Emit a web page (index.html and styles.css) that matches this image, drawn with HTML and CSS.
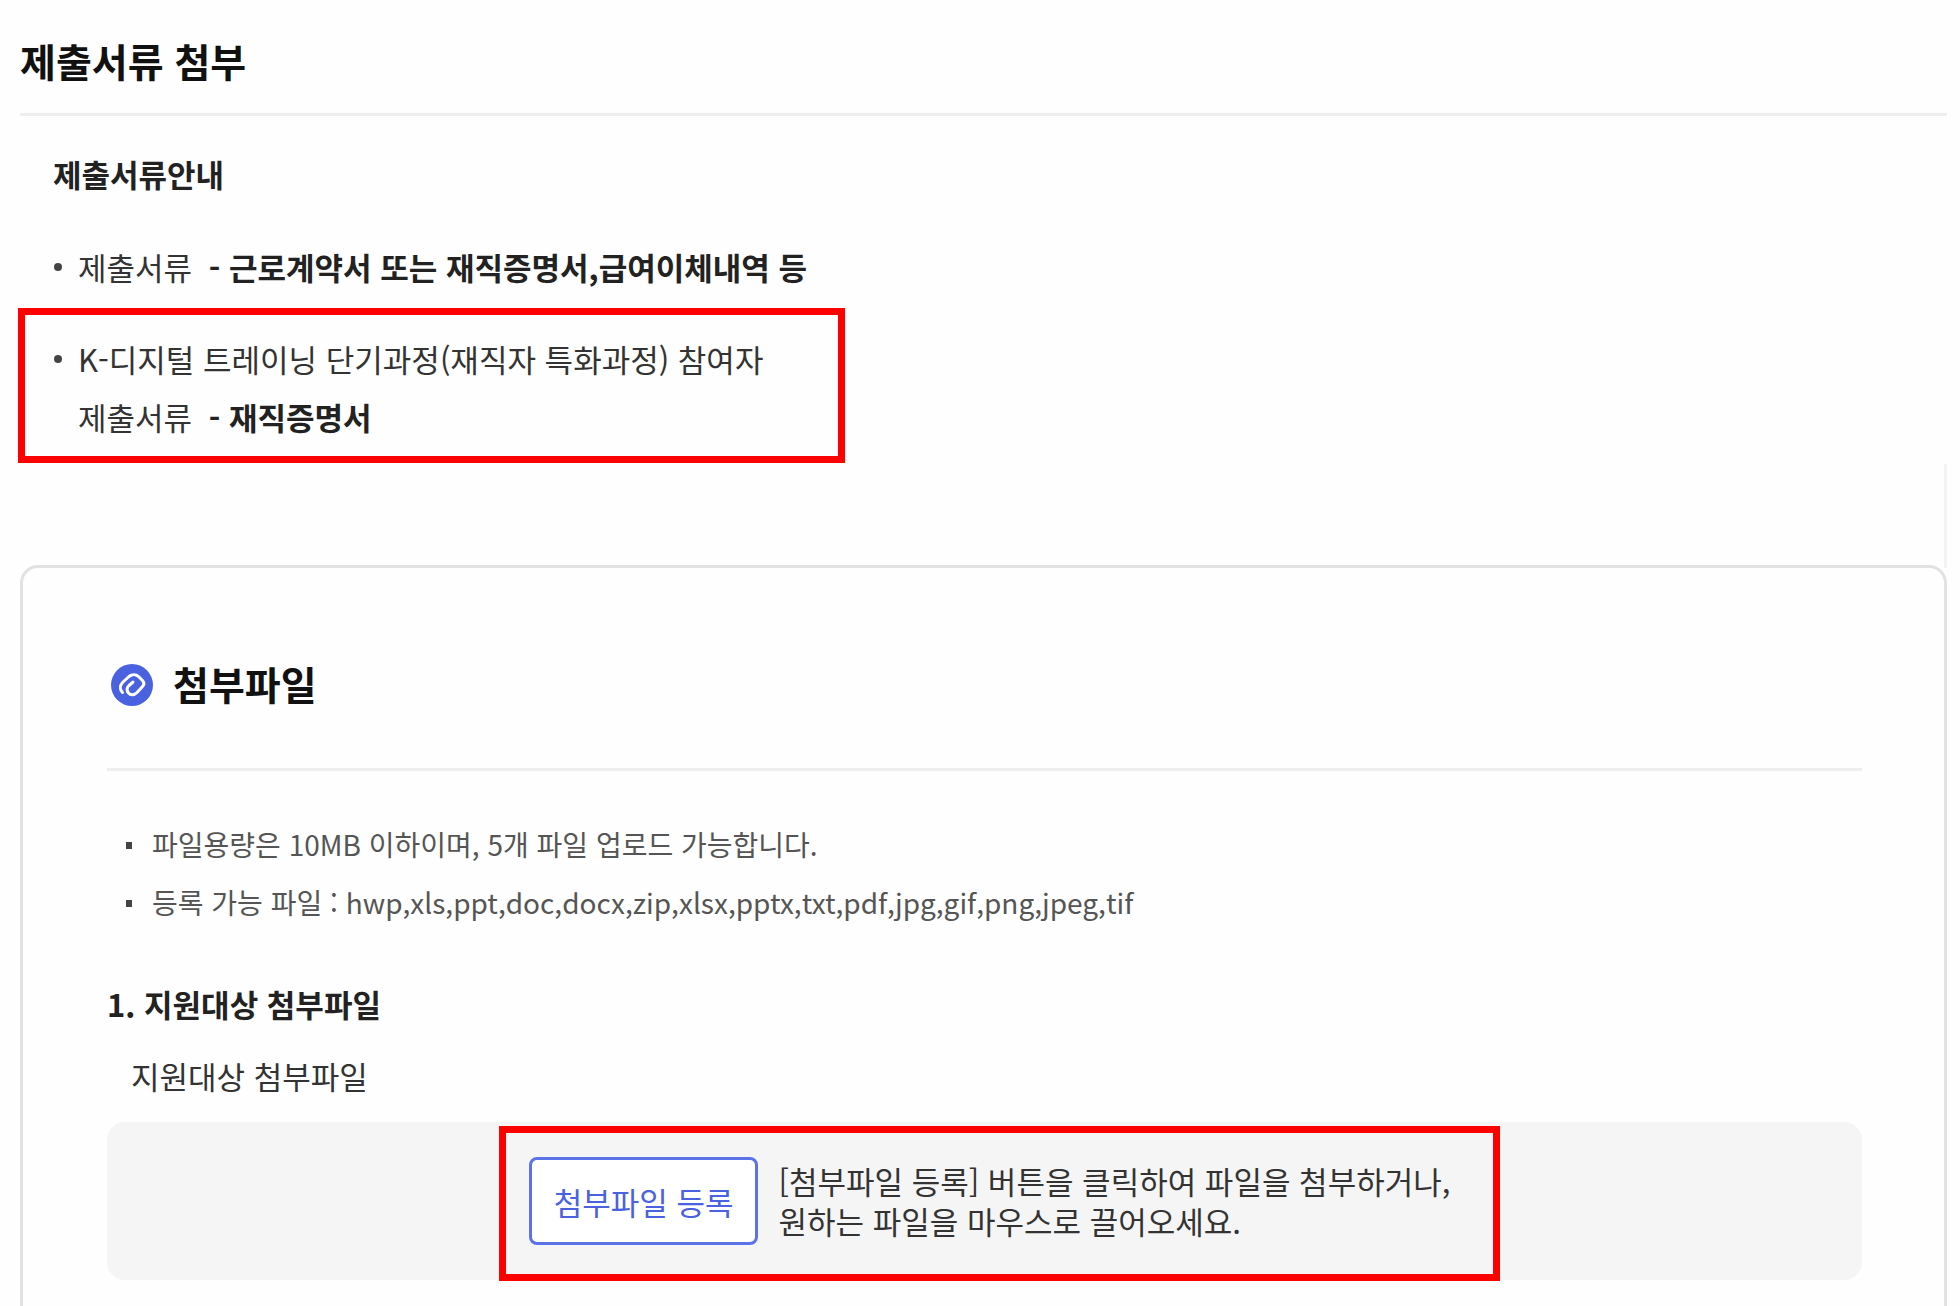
FILE: index.html
```html
<!DOCTYPE html>
<html lang="ko">
<head>
    <meta charset="UTF-8">
    <meta name="viewport" content="width=device-width, initial-scale=1.0">
    <title>제출서류 첨부</title>
    <link rel="stylesheet" href="styles.css">
</head>
<body>
    <main class="content">
        <h1 class="page-title">제출서류 첨부</h1>

        <section class="guide">
            <h2 class="guide-title">제출서류안내</h2>
            <ul class="guide-list">
                <li>제출서류 <strong>- 근로계약서 또는 재직증명서,급여이체내역 등</strong></li>
                <li class="marked">K-디지털 트레이닝 단기과정(재직자 특화과정) 참여자<br>제출서류 <strong>- 재직증명서</strong></li>
            </ul>
        </section>

        <section class="card">
            <h2 class="card-title">
                <svg class="clip-icon" viewBox="0 0 42 42" aria-hidden="true">
                    <circle cx="21" cy="21" r="21" fill="#4a61e0"/>
                    <path d="M11.500 28.500C9 26 8.500 22 11.500 18.500L18 12.500C21 10 25 10 27.500 12.500L31.500 16.500C33.500 19 33.500 20.500 31.500 22.500L26 28.500C23 31.500 19.500 31.500 17.500 29C15.500 26.500 16 23.500 18 21.500L22 18" fill="none" stroke="#fff" stroke-width="3" stroke-linecap="round" stroke-linejoin="round"/>
                </svg>
                <span>첨부파일</span>
            </h2>

            <ul class="file-rules">
                <li>파일용량은 10MB 이하이며, 5개 파일 업로드 가능합니다.</li>
                <li>등록 가능 파일 : hwp,xls,ppt,doc,docx,zip,xlsx,pptx,txt,pdf,jpg,gif,png,jpeg,tif</li>
            </ul>

            <h3 class="file-title">1. 지원대상 첨부파일</h3>
            <p class="file-label" id="file-label">지원대상 첨부파일</p>

            <div class="upload-box">
                <div class="upload-inner">
                    <button type="button" class="upload-btn" aria-describedby="file-label">첨부파일 등록</button>
                    <p class="upload-text">[첨부파일 등록] 버튼을 클릭하여 파일을 첨부하거나,<br>원하는 파일을 마우스로 끌어오세요.</p>
                </div>
            </div>
        </section>
    </main>
</body>
</html>
```
FILE: styles.css
```css
* {
    box-sizing: border-box;
}

body {
    margin: 0;
    background: #fefefe;
    color: #333;
    font-family: "Noto Sans CJK KR", sans-serif;
    font-size: 31px;
    overflow: hidden;
}

h1, h2, h3, p, ul {
    margin: 0;
    padding: 0;
}

ul {
    list-style: none;
}

.content {
    padding: 0 13px 0 20px;
}

.page-title {
    padding: 31px 0 24px;
    border-bottom: 3px solid #eee;
    color: #111;
    font-size: 39px;
    line-height: 58px;
}

.guide {
    padding: 29px 33px 0;
}

.guide-title {
    margin-bottom: 35px;
    color: #222;
    font-size: 31px;
    line-height: 58px;
}

.guide-list {
    display: flex;
    flex-direction: column;
    align-items: flex-start;
    gap: 34px;
    line-height: 58px;
}

.guide-list li {
    position: relative;
    padding-left: 25px;
}

.guide-list li::before {
    content: "";
    position: absolute;
    top: 25px;
    left: 1px;
    width: 8px;
    height: 8px;
    border-radius: 50%;
    background: #444;
}

.guide-list strong {
    margin-left: 8px;
    color: #222;
}

/* red highlight frames */
.marked::after,
.upload-inner::after {
    content: "";
    position: absolute;
    border: 7px solid #f00;
    pointer-events: none;
}

.marked::after {
    inset: -22px -82px -17px -35px;
}

.card {
    position: relative;
    margin-top: 119px;
    padding: 88px 82px 60px 84px;
    border: 3px solid #e2e2e2;
    border-radius: 18px;
}

/* faint edge that runs on above the card */
.card::before {
    content: "";
    position: absolute;
    right: -3px;
    bottom: 100%;
    width: 3px;
    height: 104px;
    background: #f3f3f3;
}

.card-title {
    display: flex;
    align-items: center;
    gap: 20px;
    padding: 0 0 54px 4px;
    border-bottom: 3px solid #eee;
    color: #111;
    font-size: 39px;
    line-height: 58px;
}

.card-title span {
    padding-bottom: 4px;
    line-height: 54px;
}

.clip-icon {
    width: 42px;
    height: 42px;
}

.file-rules {
    padding: 44px 0 0 45px;
    color: #555;
    font-size: 28px;
    line-height: 58px;
}

.file-rules li {
    position: relative;
}

.file-rules li::before {
    content: "";
    position: absolute;
    top: 27px;
    left: -26px;
    width: 6px;
    height: 7px;
    background: #444;
}

.file-title {
    margin-top: 44px;
    color: #222;
    font-size: 31px;
    line-height: 58px;
}

.file-label {
    padding: 14px 0 17px 24px;
    line-height: 58px;
}

.upload-box {
    display: flex;
    justify-content: center;
    padding: 35px 0 35px 10px;
    border-radius: 18px;
    background: #f5f5f5;
}

.upload-inner {
    position: relative;
    display: flex;
    align-items: center;
    gap: 20px;
}

.upload-inner::after {
    inset: -31px -50px -36px -30px;
}

.upload-btn {
    height: 88px;
    padding: 0 22px;
    border: 3px solid #5b72e8;
    border-radius: 8px;
    background: #fff;
    color: #4a61e0;
    font-family: inherit;
    font-size: 31px;
    cursor: pointer;
}

.upload-text {
    line-height: 40px;
}
```
